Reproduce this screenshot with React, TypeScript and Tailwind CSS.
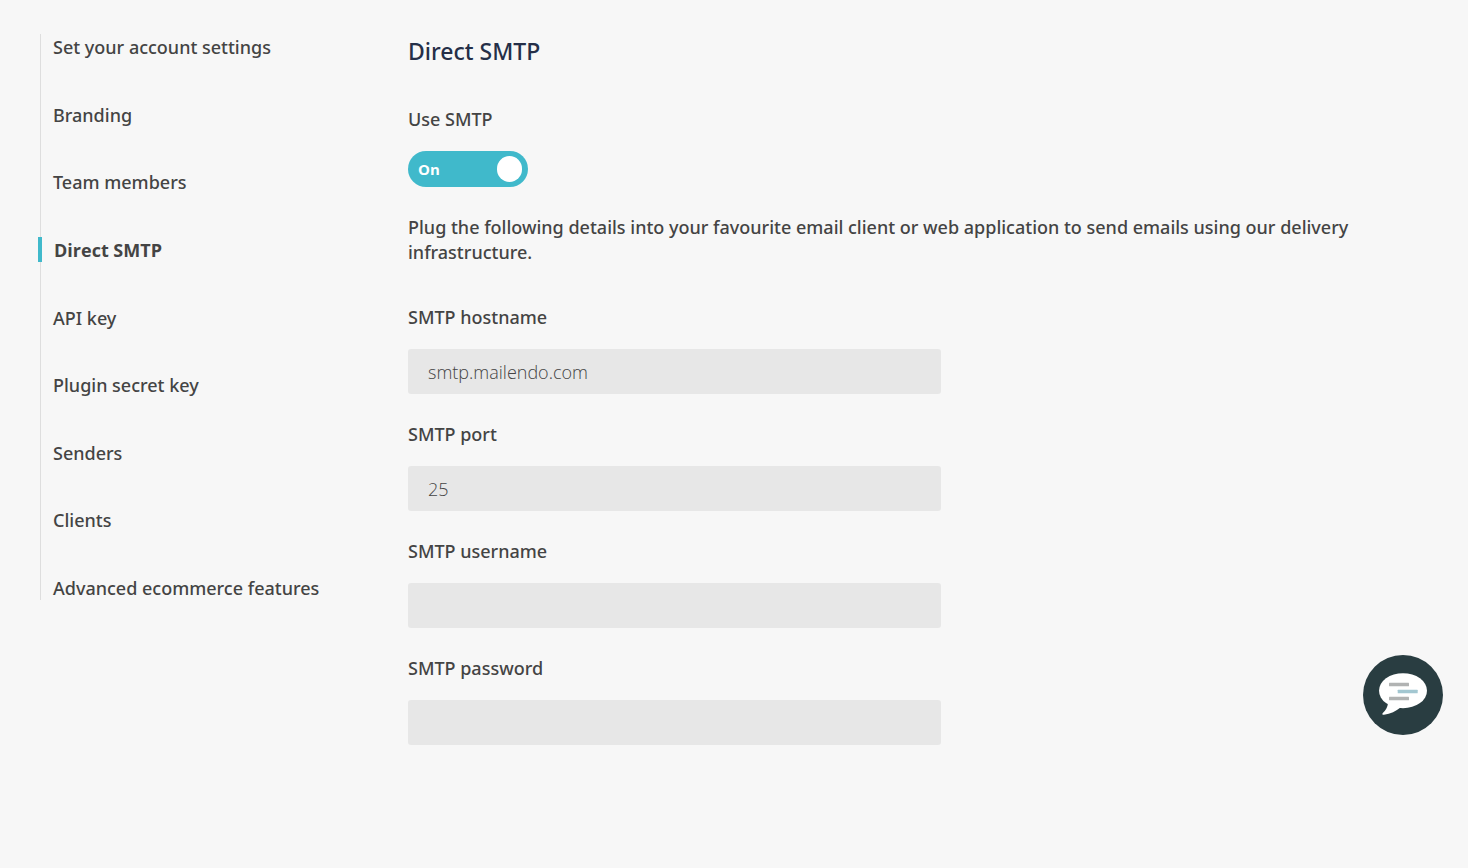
import React, { useState } from 'react';

interface Field {
  id: string;
  label: string;
  value: string;
}

const navItems = [
  'Set your account settings',
  'Branding',
  'Team members',
  'Direct SMTP',
  'API key',
  'Plugin secret key',
  'Senders',
  'Clients',
  'Advanced ecommerce features',
];

const fields: Field[] = [
  { id: 'smtp-hostname', label: 'SMTP hostname', value: 'smtp.mailendo.com' },
  { id: 'smtp-port', label: 'SMTP port', value: '25' },
  { id: 'smtp-username', label: 'SMTP username', value: '' },
  { id: 'smtp-password', label: 'SMTP password', value: '' },
];

const SettingsNav: React.FC = () => (
  <nav className="w-[368px] shrink-0">
    <ul className="flex min-h-[566px] flex-col justify-between border-l border-[#dedede] leading-6">
      {navItems.map(item => (
        <li key={item}>
          {item === 'Direct SMTP' ? (
            <a
              href="#"
              aria-current="page"
              className="-ml-[3px] block border-l-4 border-[#40b9cb] pt-px pl-3 font-['Open_Sans',sans-serif] font-bold"
            >
              {item}
            </a>
          ) : (
            <a href="#" className="block pt-px pl-3">
              {item}
            </a>
          )}
        </li>
      ))}
    </ul>
  </nav>
);

const SmtpToggle: React.FC = () => {
  const [on, setOn] = useState(true);

  return (
    <label className="flex w-max flex-col gap-[19px]">
      Use SMTP
      <input
        type="checkbox"
        role="switch"
        className="sr-only"
        checked={on}
        onChange={e => setOn(e.target.checked)}
      />
      <span
        className={`flex h-9 w-[120px] cursor-pointer items-center justify-between rounded-full pr-[6px] pl-[10px] font-['Open_Sans',sans-serif] text-[15px] font-bold text-white ${
          on ? 'bg-[#40b9cb]' : 'flex-row-reverse bg-gray-400'
        }`}
      >
        {on ? 'On' : 'Off'}
        <span className="h-[26px] w-[25px] rounded-full bg-white" />
      </span>
    </label>
  );
};

const ChatButton: React.FC = () => (
  <button
    type="button"
    aria-label="Open chat"
    className="fixed right-[25px] bottom-[133px] size-20 cursor-pointer rounded-full bg-[#293d41]"
  >
    <svg viewBox="0 0 80 80" className="size-20">
      <ellipse cx="40" cy="35.7" rx="24" ry="17.5" fill="#fff" />
      <path d="M25 47C25 52 22.5 55.5 19.8 58C18.8 59.2 19.5 60 21 59.8C27.5 59 33 56 37.5 52.5Z" fill="#fff" />
      <rect x="26" y="27.8" width="20" height="3.4" rx="0.5" fill="#b1b3b3" />
      <rect x="34.7" y="34.8" width="20" height="3.4" rx="0.5" fill="#a3c7d1" />
      <rect x="26" y="41.8" width="20" height="3.4" rx="0.5" fill="#b1b3b3" />
    </svg>
  </button>
);

const App: React.FC = () => {
  return (
    <div className="flex min-h-screen bg-[#f7f7f7] px-10 pt-[34px] font-['Noto_Sans','Open_Sans',sans-serif] text-[18px] leading-[25px] font-medium text-[#444]">
      <SettingsNav />

      <main className="min-w-0 flex-1">
        <h1 className="mb-[39px] text-[23px] leading-[34px] text-[#252f48]">Direct SMTP</h1>

        <SmtpToggle />

        <p className="mt-7 mb-10">
          Plug the following details into your favourite email client or web application to send emails using our
          delivery infrastructure.
        </p>

        <form className="flex max-w-[533px] flex-col gap-7">
          {fields.map(field => (
            <div key={field.id} className="flex flex-col gap-[19px]">
              <label htmlFor={field.id}>{field.label}</label>
              <input
                id={field.id}
                type="text"
                readOnly
                defaultValue={field.value}
                className="h-[45px] w-full rounded-[3px] bg-[#e7e7e7] px-5 font-['Open_Sans',sans-serif] font-light text-[#444]"
              />
            </div>
          ))}
        </form>
      </main>

      <ChatButton />
    </div>
  );
};

export default App;
